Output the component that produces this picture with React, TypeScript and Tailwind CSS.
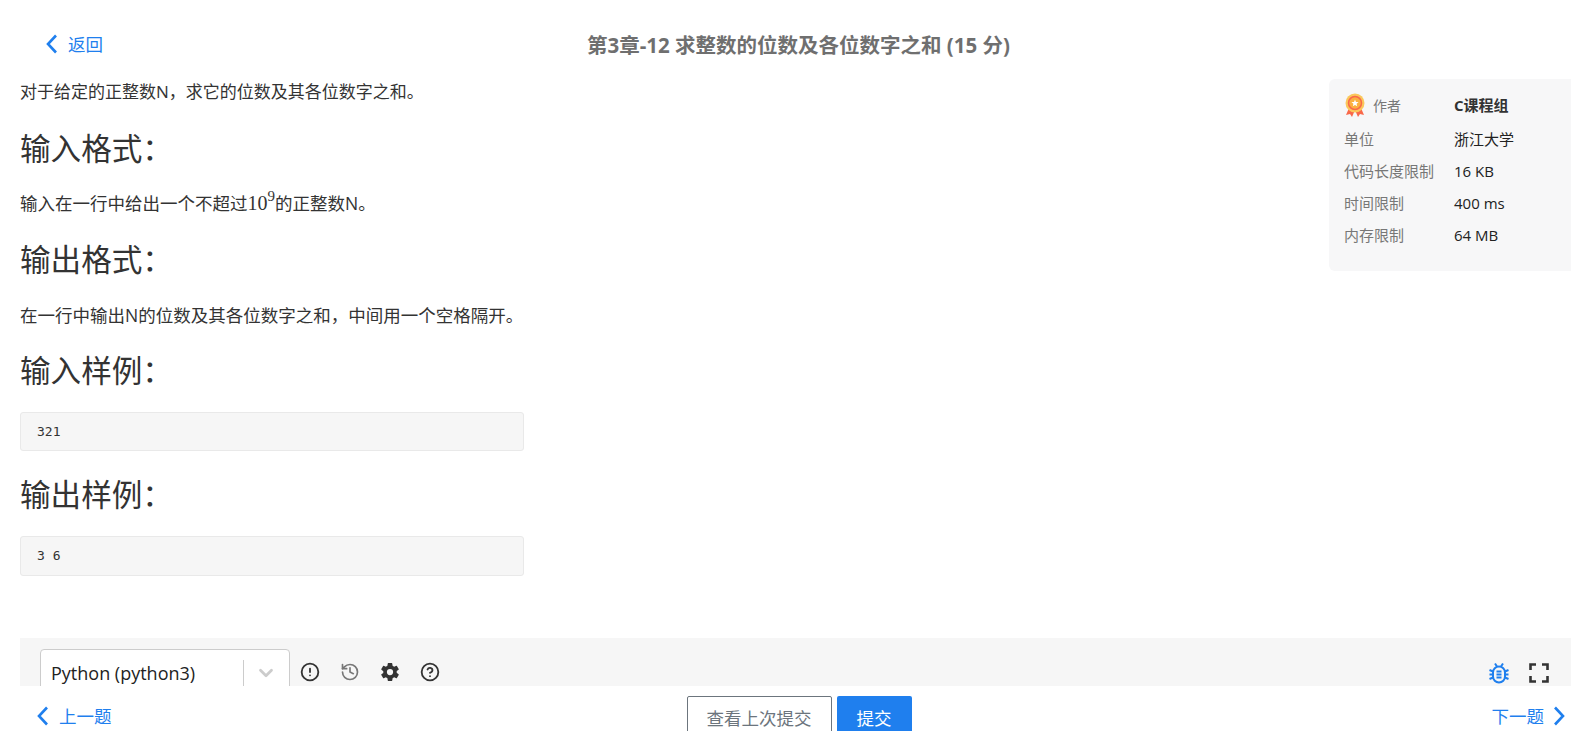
import { ChevronDown, CircleAlert, History, CircleHelp } from "lucide-react";
import { IoSettingsSharp } from "react-icons/io5";

const limits = [
  { label: "单位", value: "浙江大学" },
  { label: "代码长度限制", value: "16 KB" },
  { label: "时间限制", value: "400 ms" },
  { label: "内存限制", value: "64 MB" },
];

function Medal() {
  return (
    <svg width="22" height="24" viewBox="0 0 22 24" className="shrink-0">
      <path d="M5 15 L2 22 L6 21 L8 24 L11 17 Z" fill="#f9684a" />
      <path d="M17 15 L20 22 L16 21 L14 24 L11 17 Z" fill="#f9684a" />
      <circle cx="11" cy="10" r="9.5" fill="#fbc75b" />
      <circle cx="11" cy="10" r="6.5" fill="#fbb040" stroke="#f9684a" strokeWidth="1.5" />
      <path d="M11 6.5l1 2.4 2.6.2-2 1.7.6 2.5-2.2-1.4-2.2 1.4.6-2.5-2-1.7 2.6-.2z" fill="#fff" />
    </svg>
  );
}

function Bug() {
  return (
    <svg width="20" height="22" viewBox="0 0 20 22" fill="none" className="text-[#1f7fee]" stroke="currentColor" strokeWidth="2">
      <path d="M6 1.5 L8 4.5 M14 1.5 L12 4.5" />
      <path d="M0.5 8 L4 9.5 M0.5 12.5 H4 M0.5 17 L4 15.5 M19.5 8 L16 9.5 M19.5 12.5 H16 M19.5 17 L16 15.5" />
      <rect x="4" y="4.5" width="12" height="16" rx="6" fill="#f6f6f6" />
      <path d="M7.5 9.5 H12.5 M7.5 12.5 H12.5 M7.5 15.5 H12.5" strokeWidth="1.8" />
    </svg>
  );
}

function Fullscreen() {
  return (
    <svg width="20" height="20" viewBox="0 0 20 20" fill="none" stroke="#333" strokeWidth="2.6">
      <path d="M1.5 7 V1.5 H7 M13 1.5 H18.5 V7 M18.5 13 V18.5 H13 M7 18.5 H1.5 V13" />
    </svg>
  );
}

function Chevron({ right }: { right?: boolean }) {
  return (
    <svg width="12" height="20" viewBox="0 0 12 20" fill="none" stroke="#1f7fee" strokeWidth="2.6" className="shrink-0">
      <path d={right ? "M2 1.5 L10 10 L2 18.5" : "M10 1.5 L2 10 L10 18.5"} />
    </svg>
  );
}

function Heading({ children }: { children: string }) {
  return <h3 className="text-[30.6px] leading-[40px] text-[#333] font-normal">{children}</h3>;
}

function Sample({ children, tall }: { children: string; tall?: boolean }) {
  return (
    <pre className={`mt-[22px] rounded-[3px] border border-[#e9e9e9] bg-[#f6f6f6] pl-[16px] text-[13px] leading-[38px] text-[#333] font-['DejaVu_Sans_Mono',monospace] ${tall ? "h-[40px]" : "h-[39px]"}`}>
      {children}
    </pre>
  );
}

export default function App() {
  return (
    <div className="h-[731px] flex flex-col overflow-hidden bg-white font-['Open_Sans','Noto_Sans_CJK_SC',sans-serif]">
      <main className="flex-1 min-h-0 overflow-hidden">
        {/* Header */}
        <header className="relative h-[79px] flex items-center justify-center pt-[11px] pl-[26px]">
          <a className="absolute left-[46px] top-[34px] flex items-center gap-[10px] text-[17.5px] leading-[20px] text-[#1f7fee]">
            <Chevron />
            返回
          </a>
          <h1 className="text-[20.5px] font-bold text-[#6f6f6f]">第3章-12 求整数的位数及各位数字之和 (15 分)</h1>
        </header>

        <div className="flex justify-between pl-[20px]">
          {/* Problem text */}
          <div className="w-[504px] text-[#333]">
            <p className="text-[17px] leading-[26px] whitespace-nowrap">对于给定的正整数N，求它的位数及其各位数字之和。</p>
            <div className="mt-[23px]"><Heading>输入格式：</Heading></div>
            <p className="mt-[22px] text-[17.5px] leading-[26px] whitespace-nowrap">
              输入在一行中给出一个不超过
              <span className="font-['Liberation_Serif',serif] text-[20px]">10<sup className="text-[15px] -top-[0.6em]">9</sup></span>
              的正整数N。
            </p>
            <div className="mt-[23px]"><Heading>输出格式：</Heading></div>
            <p className="mt-[23px] text-[17.5px] leading-[26px] whitespace-nowrap">在一行中输出N的位数及其各位数字之和，中间用一个空格隔开。</p>
            <div className="mt-[22px]"><Heading>输入样例：</Heading></div>
            <Sample>321</Sample>
            <div className="mt-[23px]"><Heading>输出样例：</Heading></div>
            <Sample tall>3 6</Sample>
          </div>

          {/* Info panel */}
          <aside className="w-[242px] h-[192px] rounded-l-[6px] bg-[#f7f7f8] pl-[15px] pt-[10px] text-[15px]">
            <div className="mb-[2px] flex h-[32px] items-center">
              <div className="flex w-[110px] items-center gap-[7px] text-[#777] text-[14px]">
                <Medal />
                作者
              </div>
              <span className="font-bold text-[#333]">C课程组</span>
            </div>
            {limits.map(({ label, value }) => (
              <div key={label} className="flex h-[32px] items-center">
                <span className="w-[110px] text-[#777]">{label}</span>
                <span className="text-[#222]">{value}</span>
              </div>
            ))}
          </aside>
        </div>

        {/* Editor toolbar */}
        <div className="ml-[20px] mt-[62px] h-[60px] bg-[#f6f6f6] pl-[20px] pr-[22px] pt-[11px] flex items-start justify-between">
          <div className="flex items-start">
            <div className="flex h-[48px] w-[250px] rounded-[4px] border border-[#ccc] bg-white">
              <span className="flex-1 pl-[10px] pt-[10px] text-[18px] leading-[26px] whitespace-nowrap text-[#222]">Python (python3)</span>
              <div className="mt-[10px] h-[28px] w-[46px] shrink-0 border-l border-[#ccc] pl-[11px] pt-[2px]">
                <ChevronDown size={22} strokeWidth={3} className="text-[#ccc]" />
              </div>
            </div>
            <div className="ml-[10px] mt-[13px] flex items-center gap-[20px] text-[#333]">
              <CircleAlert size={20} strokeWidth={2.2} />
              <History size={20} className="text-[#777]" />
              <IoSettingsSharp size={20} />
              <CircleHelp size={20} strokeWidth={2.2} />
            </div>
          </div>
          <div className="mt-[13px] flex items-center gap-[20px]">
            <Bug />
            <Fullscreen />
          </div>
        </div>
      </main>

      {/* Footer */}
      <footer className="h-[45px] shrink-0 bg-white relative z-10 grid grid-cols-[1fr_auto_1fr] items-start pl-[37px] pr-[6px]">
        <a className="mt-[20px] flex items-center gap-[10px] text-[17.5px] leading-[20px] text-[#1f7fee]">
          <Chevron />
          上一题
        </a>
        <div className="mt-[10px] mr-[4px] flex gap-[5px]">
          <button className="h-[44px] w-[145px] rounded-[2px] border border-[#6c757d] text-[17.5px] text-[#6c757d]">查看上次提交</button>
          <button className="h-[44px] w-[75px] rounded-[2px] bg-[#1f7fee] text-[17.5px] text-white">提交</button>
        </div>
        <a className="mt-[20px] flex items-center justify-end gap-[9px] text-[17.5px] leading-[20px] text-[#1f7fee]">
          下一题
          <Chevron right />
        </a>
      </footer>
    </div>
  );
}
